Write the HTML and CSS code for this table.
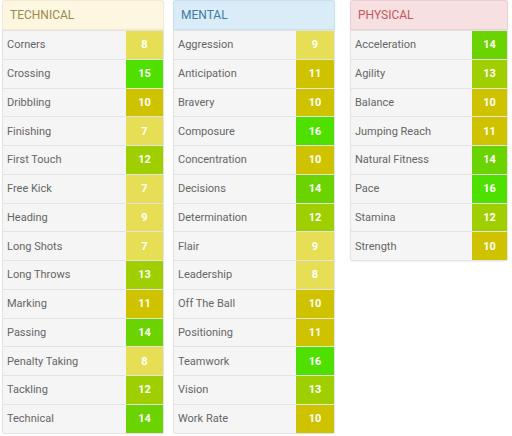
FILE: index.html
```html
<!DOCTYPE html>
<html>
<head>
<meta charset="utf-8">
<link rel="stylesheet" href="styles.css">
</head>
<body>
<div class="board">
  <section class="card tech">
    <div class="head">TECHNICAL</div>
    <div class="row"><span class="name">Corners</span><span class="val v-lo">8</span></div>
    <div class="row"><span class="name">Crossing</span><span class="val v-top">15</span></div>
    <div class="row"><span class="name">Dribbling</span><span class="val v-mid">10</span></div>
    <div class="row"><span class="name">Finishing</span><span class="val v-lo">7</span></div>
    <div class="row"><span class="name">First Touch</span><span class="val v-good">12</span></div>
    <div class="row"><span class="name">Free Kick</span><span class="val v-lo">7</span></div>
    <div class="row"><span class="name">Heading</span><span class="val v-lo">9</span></div>
    <div class="row"><span class="name">Long Shots</span><span class="val v-lo">7</span></div>
    <div class="row"><span class="name">Long Throws</span><span class="val v-good">13</span></div>
    <div class="row"><span class="name">Marking</span><span class="val v-mid">11</span></div>
    <div class="row"><span class="name">Passing</span><span class="val v-high">14</span></div>
    <div class="row"><span class="name">Penalty Taking</span><span class="val v-lo">8</span></div>
    <div class="row"><span class="name">Tackling</span><span class="val v-good">12</span></div>
    <div class="row"><span class="name">Technical</span><span class="val v-high">14</span></div>
  </section>
  <section class="card mental">
    <div class="head">MENTAL</div>
    <div class="row"><span class="name">Aggression</span><span class="val v-lo">9</span></div>
    <div class="row"><span class="name">Anticipation</span><span class="val v-mid">11</span></div>
    <div class="row"><span class="name">Bravery</span><span class="val v-mid">10</span></div>
    <div class="row"><span class="name">Composure</span><span class="val v-top">16</span></div>
    <div class="row"><span class="name">Concentration</span><span class="val v-mid">10</span></div>
    <div class="row"><span class="name">Decisions</span><span class="val v-high">14</span></div>
    <div class="row"><span class="name">Determination</span><span class="val v-good">12</span></div>
    <div class="row"><span class="name">Flair</span><span class="val v-lo">9</span></div>
    <div class="row"><span class="name">Leadership</span><span class="val v-lo">8</span></div>
    <div class="row"><span class="name">Off The Ball</span><span class="val v-mid">10</span></div>
    <div class="row"><span class="name">Positioning</span><span class="val v-mid">11</span></div>
    <div class="row"><span class="name">Teamwork</span><span class="val v-top">16</span></div>
    <div class="row"><span class="name">Vision</span><span class="val v-good">13</span></div>
    <div class="row"><span class="name">Work Rate</span><span class="val v-mid">10</span></div>
  </section>
  <section class="card physical">
    <div class="head">PHYSICAL</div>
    <div class="row"><span class="name">Acceleration</span><span class="val v-high">14</span></div>
    <div class="row"><span class="name">Agility</span><span class="val v-good">13</span></div>
    <div class="row"><span class="name">Balance</span><span class="val v-mid">10</span></div>
    <div class="row"><span class="name">Jumping Reach</span><span class="val v-mid">11</span></div>
    <div class="row"><span class="name">Natural Fitness</span><span class="val v-high">14</span></div>
    <div class="row"><span class="name">Pace</span><span class="val v-top">16</span></div>
    <div class="row"><span class="name">Stamina</span><span class="val v-good">12</span></div>
    <div class="row"><span class="name">Strength</span><span class="val v-mid">10</span></div>
  </section>
</div>
</body>
</html>
```
FILE: styles.css
```css
html, body {
  margin: 0;
  padding: 0;
  background: #ffffff;
}
body {
  font-family: Roboto, "Liberation Sans", sans-serif;
  font-size: 11px;
  color: #666666;
}
.board {
  display: flex;
  align-items: flex-start;
  padding: 0 4px 0 2px;
}
.card {
  display: flex;
  flex-direction: column;
  border: 1px solid #e4e4e4;
  border-top: 0;
  border-radius: 3px;
  box-shadow: 0 1px 2px rgba(0, 0, 0, 0.06);
  background: #f5f5f5;
}
.tech { width: 162px; }
.mental { width: 162px; margin-left: 9px; }
.physical { width: 158px; margin-left: 15px; }
.head {
  height: 28px;
  display: flex;
  align-items: center;
  padding-left: 7px;
  font-size: 12px;
  border: 1px solid transparent;
  margin: 0 -1px;
  border-radius: 3px 3px 0 0;
}
.tech .head { background: #fdf6e1; color: #9c8850; border-color: #f3ead0; }
.mental .head { background: #d9ecf8; color: #3d7aa4; border-color: #c9e0ef; }
.physical .head { background: #f7e0e1; color: #c4575d; border-color: #eecfd1; }
.row {
  display: flex;
  height: 27.75px;
  border-top: 1px solid #e3e3e3;
}
.name {
  flex: 1;
  display: flex;
  align-items: center;
  padding-left: 4px;
}
.val {
  width: 37px;
  display: flex;
  align-items: center;
  justify-content: center;
  color: #ffffff;
  font-weight: bold;
  font-size: 11px;
}
.physical .val { width: 35px; }
.mental .val { width: 38px; }
.v-lo { background: #e6df55; }
.v-mid { background: #cfc300; }
.v-good { background: #9fcf00; }
.v-high { background: #6bd300; }
.v-top { background: #4fe000; }
```
